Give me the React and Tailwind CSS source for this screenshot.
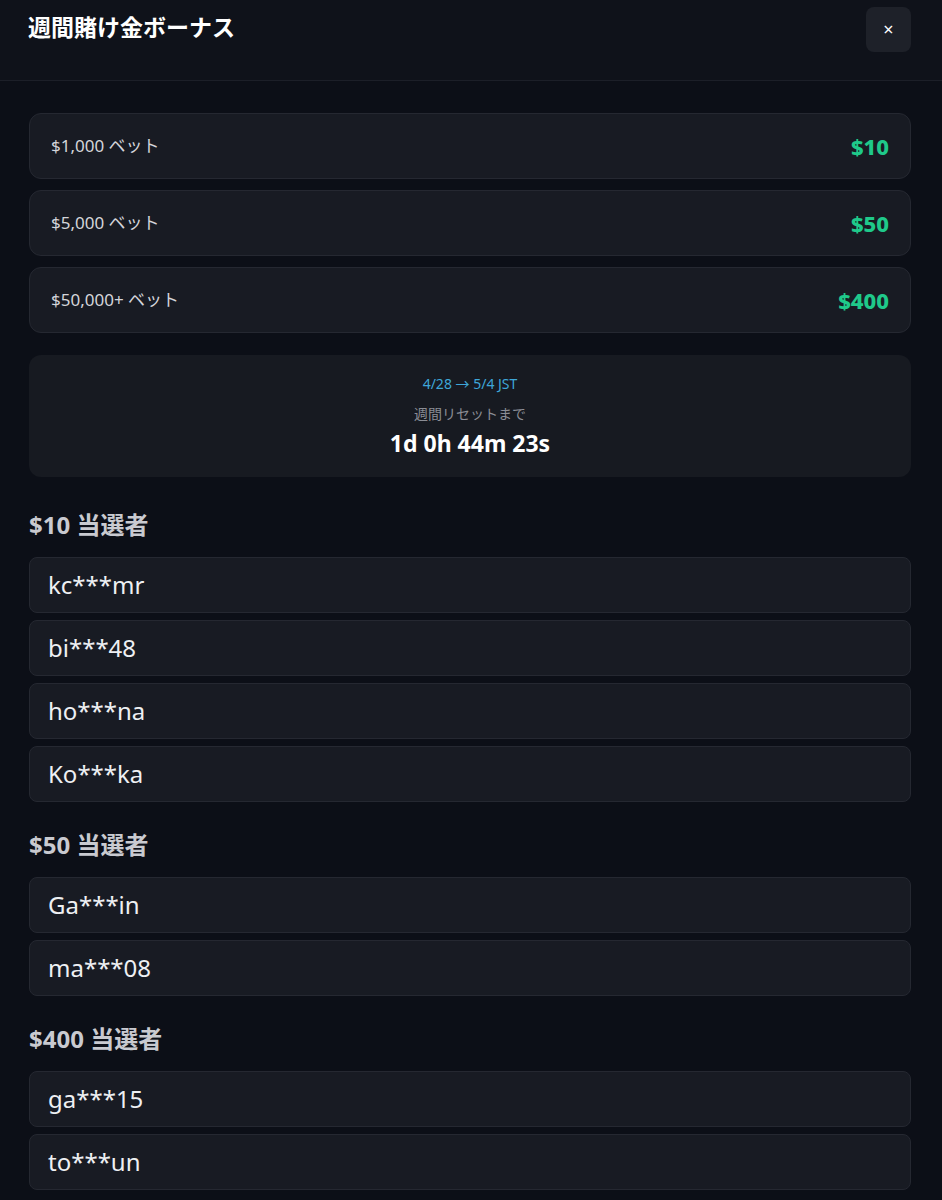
import React from 'react';

const tiers = [
  { label: '$1,000 ベット', prize: '$10' },
  { label: '$5,000 ベット', prize: '$50' },
  { label: '$50,000+ ベット', prize: '$400' },
];

const winners = [
  { title: '$10 当選者', names: ['kc***mr', 'bi***48', 'ho***na', 'Ko***ka'] },
  { title: '$50 当選者', names: ['Ga***in', 'ma***08'] },
  { title: '$400 当選者', names: ['ga***15', 'to***un'] },
];

const font = { fontFamily: '"Noto Sans", "Noto Sans CJK JP", sans-serif' };

const App = () => {
  return (
    <div className="min-h-[1200px] w-[942px] bg-[#0c0f17] text-white" style={font}>
      {/* Header */}
      <div className="flex items-center justify-between border-b border-[#1c1f28] bg-[#0f121a] pl-[28px] pr-[31px] pt-[7px] pb-[28px]">
        <h1 className="mb-[5px] text-[23px] font-bold leading-[40px] text-white">週間賭け金ボーナス</h1>
        <button className="flex h-[45px] w-[45px] items-center justify-center rounded-lg bg-[#1e2129] text-[18px] text-white">
          ×
        </button>
      </div>

      <div className="pl-[29px] pr-[31px] pt-[32px]">
        {/* Tiers */}
        <div className="flex flex-col gap-[11px]">
          {tiers.map((t) => (
            <div
              key={t.label}
              className="flex h-[66px] items-center justify-between rounded-xl border border-[#252831] bg-[#181b23] pl-[21px] pr-[21px]"
            >
              <span className="text-[17px] text-[#d4d5da]">{t.label}</span>
              <span className="text-[22px] font-extrabold text-[#1fc98a]">{t.prize}</span>
            </div>
          ))}
        </div>

        {/* Timer */}
        <div className="mt-[22px] flex h-[122px] flex-col items-center justify-center rounded-xl bg-[#171a21]">
          <div className="text-[14px] leading-[20px] text-[#3ea6d8]">4/28 → 5/4 JST</div>
          <div className="mt-[10px] text-[14px] leading-[20px] text-[#8b8d95]">週間リセットまで</div>
          <div className="mt-[4px] text-[23px] font-bold leading-[30px] text-white">1d 0h 44m 23s</div>
        </div>

        {/* Winners */}
        <div className="mt-[32px]">
          {winners.map((g, gi) => (
            <div key={g.title} className={gi > 0 ? 'mt-[27px]' : ''}>
              <h2 className="mb-[16px] text-[24px] font-bold leading-[32px] text-[#c9cad0]">{g.title}</h2>
              <div className="flex flex-col gap-[7px]">
                {g.names.map((n) => (
                  <div
                    key={n}
                    className="flex h-[56px] items-center rounded-lg border border-[#252831] bg-[#181b23] pl-[18px] text-[24px] text-[#eef0f3]"
                  >
                    {n}
                  </div>
                ))}
              </div>
            </div>
          ))}
        </div>
      </div>
    </div>
  );
};

export default App;
